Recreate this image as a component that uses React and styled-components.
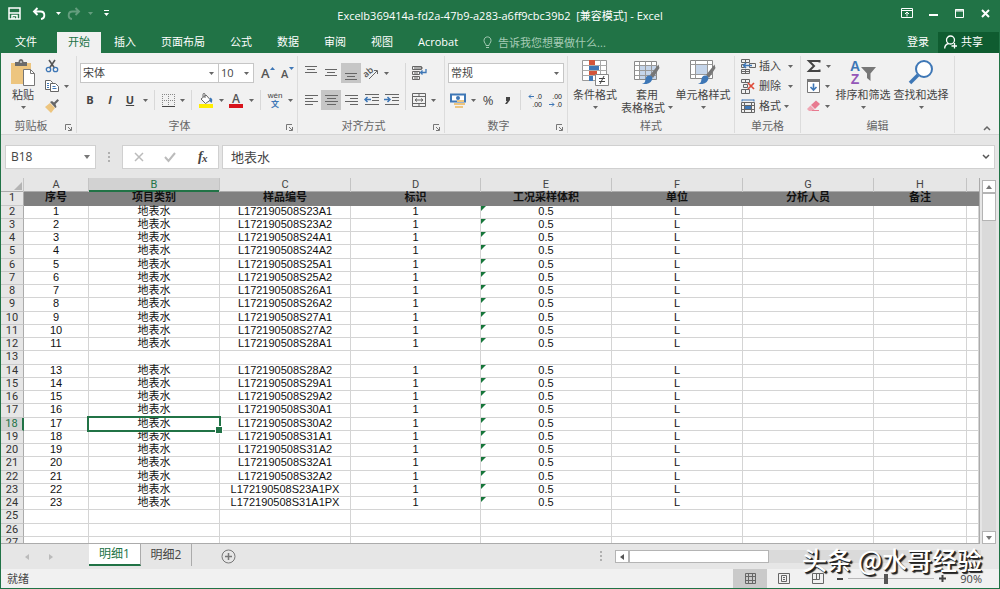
import React from "react";
import styled, { createGlobalStyle, css } from "styled-components";

const GREEN = "#217346";
const INK = "#444";
const BLUE = "#3e77b6";
const UI_FONT = '"Open Sans", "Noto Sans CJK SC", sans-serif';

const GlobalStyle = createGlobalStyle`
  * { box-sizing: border-box; }
  body { margin: 0; background: #e6e6e6; overflow: hidden; }
  button, input, select { font: inherit; color: inherit; border: 0; padding: 0; margin: 0; background: none; border-radius: 0; outline: 0; }
  svg { display: block; flex: none; overflow: visible; }
`;

const Window = styled.div`
  height: 100vh;
  display: flex;
  flex-direction: column;
  border: solid ${GREEN};
  border-width: 0 1px 1px;
  background: #e6e6e6;
  color: ${INK};
  font: 11px/14px ${UI_FONT};
  position: relative;
`;

/* ---------- title bar and tabs ---------- */

const TitleBar = styled.header`
  height: 32px;
  flex: none;
  display: grid;
  grid-template-columns: 1fr auto 1fr;
  align-items: center;
  background: ${GREEN};
  color: #fff;
`;

const QuickAccess = styled.div`
  display: flex;
  align-items: center;
  padding: 0 0 6px 3px;
`;

const Title = styled.h1`
  margin: 0;
  font-size: 11px;
  line-height: 16px;
  font-weight: 400;
  white-space: pre;
`;

const WindowButtons = styled.div`
  display: flex;
  justify-content: flex-end;
  padding: 0 1px 6px 0;
`;

const BarButton = styled.button`
  width: ${(p) => p.$w || 20}px;
  height: 20px;
  display: flex;
  align-items: center;
  justify-content: center;
  opacity: ${(p) => (p.$dim ? 0.3 : 1)};
`;

const TabBar = styled.nav`
  height: 21px;
  flex: none;
  display: flex;
  background: ${GREEN};
  color: #fff;
`;

const Tab = styled.button`
  padding: 0 12px 2px;
  margin-right: 1px;
  white-space: nowrap;
  ${(p) => p.$file && css`padding: 0 15px 2px 14px; margin-right: 5px;`}
  ${(p) => p.$active && css`padding: 0 11px 2px; background: #f1f1f1; color: ${GREEN};`}
`;

const TellMe = styled.button`
  display: flex;
  align-items: center;
  gap: 6px;
  margin-left: 12px;
  color: #a5cbb5;
`;

const Account = styled.div`
  margin-left: auto;
  display: flex;
`;

const SignIn = styled.button`
  padding: 0 9px 2px;
`;

const Share = styled.button`
  display: flex;
  align-items: center;
  gap: 4px;
  padding: 0 16px 2px 6px;
  background: #0f5c30;
`;

/* ---------- ribbon ---------- */

const Ribbon = styled.div`
  height: 82px;
  flex: none;
  display: flex;
  background: #f1f1f1;
  border-bottom: 1px solid #d4d4d4;
`;

const Group = styled.section`
  width: ${(p) => p.$w}px;
  flex: none;
  display: flex;
  flex-direction: column;
  border-right: 1px solid #dcdcdc;
  margin: 3px 0 1px;
`;

const GroupBody = styled.div`
  flex: 1;
  display: flex;
  justify-content: ${(p) => (p.$center ? "center" : "flex-start")};
  padding: ${(p) => p.$pad || "0 3px"};
`;

const GroupFooter = styled.div`
  height: 14px;
  display: flex;
  align-items: center;
  color: #666;
`;

const GroupName = styled.span`
  flex: 1;
  text-align: center;
`;

const Launcher = styled.button`
  width: 15px;
  height: 14px;
  padding-top: 3px;
  display: grid;
  place-items: center;
`;

const Lines = styled.div`
  display: flex;
  flex-direction: column;
  gap: 7px;
  width: ${(p) => (p.$w ? p.$w + "px" : "auto")};
  padding-top: 7px;
`;

const Line = styled.div`
  display: flex;
  align-items: center;
  height: 20px;
`;

const Tool = styled.button`
  width: ${(p) => p.$w || 20}px;
  height: 20px;
  display: flex;
  align-items: center;
  justify-content: center;
  flex: none;
  font-size: ${(p) => p.$size || 11}px;
  font-weight: ${(p) => (p.$bold ? 700 : 400)};
  font-style: ${(p) => (p.$italic ? "italic" : "normal")};
  text-decoration: ${(p) => (p.$under ? "underline" : "none")};
  background: ${(p) => (p.$on ? "#c6c6c6" : "transparent")};
`;

const Divider = styled.span`
  width: 1px;
  height: ${(p) => p.$h || 20}px;
  margin: ${(p) => (p.$h ? "7px 4px 0" : "0 4px")};
  background: #d8d8d8;
  flex: none;
`;

const BigButton = styled.button`
  width: ${(p) => p.$w}px;
  flex: none;
  display: flex;
  flex-direction: column;
  align-items: center;
  padding-top: 3px;
  height: 60px;
  white-space: nowrap;
`;

const BigIcon = styled.span`
  height: 29px;
`;

const BigLine = styled.span`
  height: 13px;
  line-height: 14px;
  display: flex;
  align-items: center;
  gap: 3px;
`;

const Stack = styled.div`
  display: flex;
  flex-direction: column;
`;

const SmallButton = styled.button`
  height: 20px;
  display: flex;
  align-items: center;
  gap: ${(p) => p.$gap || 3}px;
  padding: 0 3px;
  white-space: nowrap;
  svg:last-child { margin-left: ${(p) => (p.$wide ? 4 : 0)}px; }
`;

const SelectBox = styled.label`
  position: relative;
  width: ${(p) => p.$w}px;
  height: 20px;
  border: 1px solid #c6c6c6;
  margin-right: ${(p) => p.$after || 0}px;
  background: #fff;
  & + & { border-left: 0; }
  select { appearance: none; width: 100%; height: 18px; padding-left: 2px; }
  svg { position: absolute; right: 4px; top: 8px; pointer-events: none; }
`;

const Collapse = styled.button`
  margin: auto 8px 3px auto;
`;

/* ---------- formula bar ---------- */

const FormulaBar = styled.div`
  height: 43px;
  flex: none;
  display: flex;
  align-items: center;
  padding: 1px 4px 0;
  font-size: 13px;
`;

const Field = styled.div`
  height: 24px;
  width: ${(p) => (p.$w ? p.$w + "px" : "auto")};
  flex: ${(p) => (p.$w ? "none" : "1")};
  display: flex;
  align-items: center;
  justify-content: space-around;
  background: #fff;
  border: 1px solid #d0d0d0;
  margin-right: ${(p) => p.$after || 0}px;
  input { flex: 1; min-width: 0; height: 22px; padding: 0 0 2px ${(p) => p.$indent || 0}px; }
`;

const NameField = styled(Field)`
  font-size: 12px;
`;

const FieldArrow = styled.button`
  width: 16px;
  height: 22px;
  display: grid;
  place-items: center;
`;

const Dots = styled.span`
  width: 26px;
  display: grid;
  place-items: center;
  flex: none;
`;

/* ---------- sheet ---------- */

const SheetArea = styled.main`
  flex: 1;
  min-height: 0;
  display: flex;
`;

const GridPane = styled.div`
  flex: 1;
  min-width: 0;
  overflow: hidden;
  border-right: 1px solid #ababab;
  border-bottom: 1px solid #ababab;
`;

const Grid = styled.table`
  width: 100%;
  table-layout: fixed;
  border-collapse: separate;
  border-spacing: 0;
  font: 11px/11px "Liberation Sans", "Noto Sans CJK SC", sans-serif;
  color: #111;
  th, td { padding: 0; text-align: center; vertical-align: top; white-space: nowrap; }
`;

const ColumnHead = styled.th`
  height: 14px;
  font: 400 11px/14px Roboto, sans-serif;
  color: ${(p) => (p.$on ? GREEN : INK)};
  background: ${(p) => (p.$on ? "#d2d2d2" : "#e6e6e6")};
  border-right: 1px solid #c4c4c4;
  box-shadow: inset 0 ${(p) => (p.$on ? `-2px ${GREEN}` : "-1px #ababab")};
  &:last-child { border-right: 0; }
  svg { margin: 4px 0 0 13px; }
`;

const Row = styled.tr`
  height: 13px;
  &:nth-child(4n + 1) { height: 14px; }
`;

const RowHead = styled.th`
  font: 400 11px/12px Roboto, sans-serif;
  color: ${(p) => (p.$on ? GREEN : "#333")};
  background: ${(p) => (p.$on ? "#d2d2d2" : "#e6e6e6")};
  border-right: ${(p) => (p.$on ? `2px solid ${GREEN}` : "1px solid #ababab")};
  border-bottom: 1px solid #c8c8c8;
`;

const Cell = styled.td`
  position: relative;
  background: #fff;
  border-right: 1px solid #d4d4d4;
  border-bottom: 1px solid #d4d4d4;
  ${(p) => p.$title && css`background: #808080; border-color: #808080; font-weight: 700;`}
  ${(p) => p.$flag && css`
    &::before {
      content: "";
      position: absolute;
      left: 0;
      top: 0;
      border-top: 5px solid #16763a;
      border-right: 5px solid transparent;
    }
  `}
`;

const Selection = styled.span`
  position: absolute;
  z-index: 1;
  inset: -2px;
  border: 2px solid ${GREEN};
  &::after {
    content: "";
    position: absolute;
    right: -4px;
    bottom: -4px;
    width: 6px;
    height: 6px;
    background: ${GREEN};
    border: 1px solid #fff;
  }
`;

const VerticalScroll = styled.div`
  width: 19px;
  flex: none;
  padding: 2px 3px 0 2px;
  display: flex;
  flex-direction: column;
`;

const VerticalTrack = styled.div`
  flex: 1;
  background: #dadada;
`;

const ScrollButton = styled.button`
  width: 14px;
  height: 13px;
  flex: none;
  display: grid;
  place-items: center;
  background: #fff;
  border: 1px solid #b4b4b4;
`;

const VerticalThumb = styled.div`
  height: 28px;
  background: #fff;
  border: 1px solid #b4b4b4;
`;

/* ---------- sheet tabs and status bar ---------- */

const SheetTabs = styled.div`
  height: 25px;
  flex: none;
  display: flex;
  align-items: center;
`;

const SheetNav = styled.div`
  width: 88px;
  display: flex;
  padding-left: 16px;
`;

const SheetTab = styled.button`
  height: 22px;
  width: ${(p) => (p.$active ? 52 : 51)}px;
  align-self: flex-start;
  font-size: 12px;
  border-right: 1px solid #ababab;
  ${(p) => p.$active && css`
    background: #fff;
    color: ${GREEN};
    border-bottom: 2px solid ${GREEN};
  `}
`;

const AddSheet = styled.button`
  margin-left: 29px;
`;

const HorizontalScroll = styled.div`
  width: 366px;
  height: 13px;
  margin-right: 18px;
  display: flex;
  background: #dadada;
`;

const HorizontalThumb = styled.div`
  width: 140px;
  background: #fff;
  border: 1px solid #b4b4b4;
`;

const Grip = styled(Dots)`
  margin-left: auto;
  width: 28px;
`;

const StatusBar = styled.footer`
  height: 19px;
  flex: none;
  display: flex;
  align-items: center;
  background: #f1f1f1;
  padding: 0 17px 0 6px;
`;

const Views = styled.div`
  margin-left: auto;
  display: flex;
  align-self: stretch;
`;

const ViewButton = styled.button`
  width: 34px;
  display: grid;
  place-items: center;
  background: ${(p) => (p.$on ? "#cacaca" : "transparent")};
`;

const ZoomStep = styled.button`
  width: 10px;
  display: grid;
  place-items: center;
`;

const ZoomSlider = styled.input`
  appearance: none;
  width: 86px;
  height: 12px;
  margin: 0 3px;
  background: linear-gradient(#b8b8b8, #b8b8b8) center / 100% 1px no-repeat;
  &::-webkit-slider-thumb {
    appearance: none;
    width: 4px;
    height: 10px;
    background: #555;
  }
`;

const ZoomValue = styled.span`
  width: 35px;
  text-align: right;
`;

const Watermark = styled.div`
  position: absolute;
  right: 17px;
  bottom: 15px;
  font: 500 25px/28px "Noto Sans CJK SC", sans-serif;
  color: #fff;
  text-shadow: 1px 1px 0 #222, 2px 2px 1px #222;
  pointer-events: none;
`;

/* ---------- icons ---------- */

const Svg = ({ w = 16, h = 16, children, ...rest }) => (
  <svg width={w} height={h} viewBox={`0 0 ${w} ${h}`} fill="none" stroke="currentColor" aria-hidden="true" {...rest}>
    {children}
  </svg>
);

const Caret = ({ color = "#666" }) => (
  <Svg w={5} h={3} stroke="none"><path d="M0 0h5L2.500 3z" fill={color} /></Svg>
);

const Save = () => (
  <Svg w={13} h={13} strokeWidth="1.500">
    <path d="M1 1h11v11H1zM1 6h11M4 12V8.500h5V12M6 10v2" />
  </Svg>
);

const Undo = ({ flip }) => (
  <Svg w={14} h={13} strokeWidth="1.900">
    <g transform={flip ? "translate(14 0) scale(-1 1)" : undefined}>
      <path d="M2 4.500h6.500c5 0 5 7 .5 7.500M5.500 1L2 4.500 5.500 8" />
    </g>
  </Svg>
);

const Paste = () => (
  <Svg w={26} h={28}>
    <path d="M1 4h20v21H1z" fill="#edc57f" stroke="none" />
    <path d="M5 3h3.500c0-4 5-4 5 0H17v4H5z" fill="#6b6b6b" stroke="none" />
    <path d="M10 3h2" stroke="#fff" />
    <path d="M13.500 10.500h7l4 4v12h-11z" fill="#fff" stroke="#777" />
    <path d="M20.500 10.500v4h4" stroke="#777" />
  </Svg>
);

const Cut = () => (
  <Svg w={14} h={14}>
    <path d="M4 1l5.500 8M10 1L4.500 9" stroke="#555" strokeWidth="1.600" />
    <circle cx="3.500" cy="10.500" r="2.200" stroke={BLUE} strokeWidth="1.300" />
    <circle cx="10.500" cy="10.500" r="2.200" stroke={BLUE} strokeWidth="1.300" />
  </Svg>
);

const Copy = () => (
  <Svg w={14} h={14} stroke="#666">
    <path d="M.500 1.500h5l2 2v7h-7z" fill="#fff" />
    <path d="M5.500 4.500h5l3 3v5h-8z" fill="#fff" />
    <path d="M2 4.500h2M2 6.500h2M2 8.500h2M7.500 7.500h3M7.500 9.500h4" stroke={BLUE} />
  </Svg>
);

const Painter = () => (
  <Svg w={14} h={14} stroke="none">
    <path d="M0 8l5-4 5 5-4 5z" fill="#edc57f" />
    <path d="M5 3l2-1 2 1.500L12.500 0 14 1.500 10.500 5l1 3-1 1z" fill="#666" />
  </Svg>
);

const GrowFont = ({ down }) => (
  <Svg w={15} h={15} stroke="none">
    <text x="0" y="12" fontSize={down ? 11 : 13} fontWeight="600" fill="#555">A</text>
    <path d={down ? "M8 1h5l-2.500 3z" : "M9 4h5l-2.500-3z"} fill={BLUE} />
  </Svg>
);

const Borders = () => (
  <Svg w={13} h={13} stroke="#888" strokeDasharray="1 1">
    <path d="M.500 0v13M6.500 0v13M12.500 0v13M0 .500h13M0 6.500h13" />
    <path d="M0 12.500h13" stroke="#444" strokeDasharray="none" />
  </Svg>
);

const Fill = () => (
  <Svg w={16} h={15}>
    <path d="M3 6l5-4 4.500 5-5 3.500z" fill="#fff" stroke="#666" />
    <path d="M7 5V1.500c0-1.500-2-1.500-2 0V4" stroke="#666" />
    <path d="M12 4.500c3 1 2.500 3 1.500 5.500L11.500 8z" fill={BLUE} stroke="none" />
    <path d="M1 11h14v4H1z" fill="#ffee00" stroke="none" />
  </Svg>
);

const FontColor = () => (
  <Svg w={14} h={15} stroke="none">
    <text x="7" y="10" fontSize="12" fontWeight="600" textAnchor="middle" fill="#555">A</text>
    <path d="M0 11h14v4H0z" fill="#d8141c" />
  </Svg>
);

const Phonetic = () => (
  <Svg w={16} h={16} stroke="none" fontFamily="Liberation Sans, Noto Sans CJK SC, sans-serif">
    <text x="8" y="6" fontSize="8" textAnchor="middle" fill="#444">wén</text>
    <text x="8" y="15" fontSize="8" fontWeight="700" textAnchor="middle" fill={BLUE}>文</text>
  </Svg>
);

const VAlign = ({ y }) => (
  <Svg w={14} h={14} stroke="#666">
    <path d={`M1 ${y + 0.5}h12M3 ${y + 3.5}h8M1 ${y + 6.5}h12`} />
  </Svg>
);

const HAlign = ({ x, w = 8 }) => (
  <Svg w={13} h={12} stroke="#666">
    <path d={`M0 1.500h13M${x} 4.500h${w}M0 7.500h13M${x} 10.500h${w}`} />
  </Svg>
);

const Orientation = () => (
  <Svg w={15} h={14}>
    <text x="0" y="9" fontSize="9" fontWeight="600" fill="#555" stroke="none" transform="rotate(-40 5 8)">ab</text>
    <path d="M5 13l8-8M10 4.500h3.500V8" stroke="#666" />
  </Svg>
);

const Indent = ({ right }) => (
  <Svg w={15} h={12} stroke="#666">
    <path d="M1 .500h14M8 3.500h7M8 6.500h7M1 10.500h14" />
    <path d={right ? "M0 5.500h6M3.500 3l2.500 2.500L3.500 8" : "M1 5.500h6M3.500 3L1 5.500 3.500 8"} stroke={BLUE} strokeWidth="1.500" />
  </Svg>
);

const Wrap = () => (
  <Svg w={15} h={14} stroke="#666">
    <path d="M.500 .500h9v3h-9zM.500 5.500h7v3h-7zM.500 10.500h7v3h-7zM2 2h9M2 7h4M2 12h4" />
    <path d="M14 3v3.500H8.500M10.500 4.500L8.500 6.500l2 2" stroke={BLUE} strokeWidth="1.300" />
  </Svg>
);

const Merge = () => (
  <Svg w={14} h={14} stroke="#666">
    <path d="M.500 .500h13v13H.500zM.500 3.500h13M.500 10.500h13M7 .500v3M7 10.500v3" />
    <path d="M3 7h8M5 5.500L3 7l2 1.500M9 5.500L11 7 9 8.500" />
  </Svg>
);

const Currency = () => (
  <Svg w={16} h={15}>
    <path d="M1 1.500h14v7H1z" stroke={BLUE} strokeWidth="2" fill="#fff" />
    <circle cx="8" cy="5" r="2" fill={BLUE} stroke="none" />
    <path d="M7 7h7v2H7zM8 10h7v2H8zM4 10h6v2H4zM5 13h8v2H5z" fill="#edc57f" stroke="none" />
  </Svg>
);

const Decimals = ({ less }) => (
  <Svg w={15} h={16} stroke="none" fontFamily="Liberation Sans, sans-serif">
    <text x="14" y="7" fontSize="7" textAnchor="end" fill="#222">{less ? ".00" : ".0"}</text>
    <text x="14" y="15" fontSize="7" textAnchor="end" fill="#222">{less ? ".0" : ".00"}</text>
    <path d={less ? "M1 12.500h5M4 10.500l2 2-2 2" : "M1 4.500h5M3 2.500l-2 2 2 2"} stroke={BLUE} />
  </Svg>
);

const Brush = () => (
  <>
    <path d="M25.500 5.500L17 16l3 3 6.500-10z" fill="#777" stroke="none" />
    <path d="M16 16.500c3 0 4 2 3 4.500-1.500 3.500-6 4.500-10 4 3-1 3-2 3.500-5 .500-2 1.500-3.500 3.500-3.500z" fill={BLUE} stroke="none" />
  </>
);

const Conditional = () => (
  <Svg w={28} h={28}>
    <path d="M1.500 1.500h24v20h-24z" fill="#fff" stroke="#999" />
    <path d="M8.500 1.500v20M19.500 1.500v20M1.500 6.500h24M1.500 11.500h24M1.500 16.500h24" stroke="#aaa" />
    <path d="M8 1h6v5H8zM8 12h8v4H8z" fill="#d3553a" stroke="none" />
    <path d="M8 7h10v4H8zM8 17h4v5H8z" fill={BLUE} stroke="none" />
    <path d="M14.500 15.500h13v11h-13z" fill="#fff" stroke="#888" />
    <path d="M18 19.500h6M18 22.500h6M23 17l-4 8" stroke="#444" />
  </Svg>
);

const FormatTable = () => (
  <Svg w={28} h={28}>
    <path d="M1.500 2.500h22v18h-22z" fill="#fff" stroke="#888" />
    <path d="M7 7h16v13H7z" fill="#c5d5ea" stroke="none" />
    <path d="M6.500 2.500v18M12.500 2.500v18M18.500 2.500v18M1.500 6.500h22M1.500 11.500h22M1.500 16.500h22" stroke="#999" />
    <Brush />
  </Svg>
);

const CellStyles = () => (
  <Svg w={28} h={28}>
    <path d="M1.500 1.500h22v18h-22z" fill="#fff" stroke="#888" />
    <path d="M6.500 1.500v18M18.500 1.500v18M1.500 5.500h22M1.500 15.500h22" stroke="#999" />
    <path d="M7 6h11v9H7z" fill="#c5d5ea" stroke="none" />
    <Brush />
  </Svg>
);

const InsertCells = () => (
  <Svg w={15} h={15} stroke="#666">
    <path d="M.500 .500h8v3h-8zM4.500 .500v3M.500 10.500h8v4h-8zM4.500 10.500v4M.500 12.500h8M.500 5.500h3v3h-3zM8.500 4.500h6v4h-6z" />
    <path d="M2 6.500h9M5 4L2.500 6.500 5 9" stroke={BLUE} strokeWidth="1.500" />
  </Svg>
);

const DeleteCells = () => (
  <Svg w={15} h={15} stroke="#666">
    <path d="M.500 .500h8v3h-8zM4.500 .500v3M.500 10.500h8v4h-8zM4.500 10.500v4M2.500 5.500h4v3h-4z" />
    <path d="M7 4l6 6M13 4l-6 6" stroke="#df4b38" strokeWidth="1.700" />
  </Svg>
);

const FormatCells = () => (
  <Svg w={15} h={15} stroke="#666">
    <path d="M1 1h12M1 .500v2M13 .500v2" stroke={BLUE} />
    <path d="M.500 3.500h13v10H.500zM3.500 3.500v10M10.500 3.500v10M.500 6.500h13M.500 10.500h13" />
    <path d="M4 7h6v3H4z" fill={BLUE} stroke="none" />
  </Svg>
);

const Sigma = () => (
  <Svg w={14} h={14} strokeWidth="2"><path d="M12.500 3.500V2H2l5 5-5 5h10.500v-1.500" /></Svg>
);

const FillDown = () => (
  <Svg w={13} h={14}>
    <path d="M.500 .500h12v13H.500z" fill="#fff" stroke="#777" />
    <path d="M0 0h13v3H0z" fill="#777" stroke="none" />
    <path d="M6.500 4.500V11M3.500 8l3 3 3-3" stroke={BLUE} strokeWidth="1.600" />
  </Svg>
);

const Eraser = () => (
  <Svg w={13} h={12} stroke="none">
    <path d="M4 5l5-4.500L13 4 8 9z" fill="#e87a90" />
    <path d="M3.500 5.500L0 9l2 2h4l1.500-1.500z" fill="#f0a6b4" />
    <path d="M5 10.500h7" stroke="#e87a90" />
  </Svg>
);

const SortFilter = () => (
  <Svg w={26} h={28} stroke="none" fontFamily="Liberation Sans, sans-serif">
    <text x="5" y="12" fontSize="14" fontWeight="700" textAnchor="middle" fill={BLUE}>A</text>
    <text x="5" y="25" fontSize="14" fontWeight="700" textAnchor="middle" fill="#9457b8">Z</text>
    <path d="M11 8h15l-5.500 6.500V22L17 19v-4.500z" fill="#777" />
  </Svg>
);

const Find = () => (
  <Svg w={26} h={28}>
    <circle cx="16" cy="10" r="8" fill="#fff" stroke={BLUE} strokeWidth="2" />
    <path d="M10 16l-8 8" stroke={BLUE} strokeWidth="3.500" />
  </Svg>
);

const LauncherIcon = () => (
  <Svg w={7} h={7} stroke="#777"><path d="M.500 6V.500H6M3 3l3 3M6.500 3v3.500H3" /></Svg>
);

const DotsIcon = () => (
  <Svg w={2} h={11} stroke="none">
    <path d="M0 0h2v2H0zM0 4h2v2H0zM0 8h2v2H0z" fill="#b0b0b0" />
  </Svg>
);

/* ---------- parts ---------- */

const RibbonGroup = ({ name, w, launcher, center, pad, children }) => (
  <Group $w={w} aria-label={name}>
    <GroupBody $center={center} $pad={pad}>{children}</GroupBody>
    <GroupFooter>
      <GroupName>{name}</GroupName>
      {launcher && <Launcher aria-label={`${name}设置`}><LauncherIcon /></Launcher>}
    </GroupFooter>
  </Group>
);

const Drop = () => <Tool $w={10} aria-label="更多"><Caret /></Tool>;

const Big = ({ icon, w, label, second }) => (
  <BigButton $w={w}>
    <BigIcon>{icon}</BigIcon>
    <BigLine>{label}</BigLine>
    <BigLine>{second}<Caret /></BigLine>
  </BigButton>
);

const Select = ({ w, value, label, after }) => (
  <SelectBox $w={w} $after={after}>
    <select aria-label={label} defaultValue={value}><option>{value}</option></select>
    <Caret />
  </SelectBox>
);

const COLUMNS = [
  ["A", 65], ["B", 131], ["C", 131], ["D", 130], ["E", 131], ["F", 131], ["G", 131], ["H", 93],
];
const TITLES = ["序号", "项目类别", "样品编号", "标识", "工况采样体积", "单位", "分析人员", "备注", ""];
const SAMPLES = [
  "23A1", "23A2", "24A1", "24A2", "25A1", "25A2", "26A1", "26A2", "27A1", "27A2", "28A1", null,
  "28A2", "29A1", "29A2", "30A1", "30A2", "31A1", "31A2", "32A1", "32A2", "23A1PX", "31A1PX",
  null, null, null,
];
const TABS = ["插入", "页面布局", "公式", "数据", "审阅", "视图", "Acrobat"];

const Sheet = () => (
  <Grid>
    <colgroup>
      <col style={{ width: 23 }} />
      {COLUMNS.map(([name, width]) => <col key={name} style={{ width }} />)}
      <col />
    </colgroup>
    <thead>
      <tr>
        <ColumnHead aria-label="全选">
          <Svg w={8} h={8} stroke="none"><path d="M8 0v8H0z" fill="#b4b4b4" /></Svg>
        </ColumnHead>
        {COLUMNS.map(([name]) => <ColumnHead key={name} $on={name === "B"}>{name}</ColumnHead>)}
        <ColumnHead />
      </tr>
    </thead>
    <tbody>
      <Row>
        <RowHead>1</RowHead>
        {TITLES.map((t, i) => <Cell key={i} $title>{t}</Cell>)}
      </Row>
      {SAMPLES.map((s, i) => {
        const number = i + 2;
        const values = s ? [i + 1, "地表水", `L172190508S${s}`, 1, "0.5", "L", "", "", ""] : Array(9).fill("");
        return (
          <Row key={number}>
            <RowHead $on={number === 18}>{number}</RowHead>
            {values.map((v, c) => (
              <Cell key={c} $flag={c === 4 && s}>
                {v}
                {number === 18 && c === 1 && <Selection />}
              </Cell>
            ))}
          </Row>
        );
      })}
    </tbody>
  </Grid>
);

export default function App() {
  return (
    <Window>
      <GlobalStyle />
      <TitleBar>
        <QuickAccess>
          <BarButton aria-label="保存"><Save /></BarButton>
          <BarButton $w={30} aria-label="撤消"><Undo /></BarButton>
          <BarButton $w={8} aria-label="撤消列表"><Caret color="#fff" /></BarButton>
          <BarButton $w={24} $dim aria-label="恢复"><Undo flip /></BarButton>
          <BarButton $w={8} $dim aria-label="恢复列表"><Caret color="#fff" /></BarButton>
          <BarButton $w={24} aria-label="自定义">
            <Svg w={5} h={6} stroke="none"><path d="M0 0h5v1H0zM0 3h5L2.500 6z" fill="#fff" /></Svg>
          </BarButton>
        </QuickAccess>
        <Title>Excelb369414a-fd2a-47b9-a283-a6ff9cbc39b2  [兼容模式] - Excel</Title>
        <WindowButtons>
          <BarButton $w={26} aria-label="功能区显示选项">
            <Svg w={12} h={10}><path d="M.500 .500h11v9H.500zM.500 2.500h11M6 8.500V4.500M4 6l2-2 2 2" /></Svg>
          </BarButton>
          <BarButton $w={26} aria-label="最小化"><Svg w={9} h={6} strokeWidth="2"><path d="M0 5h9" /></Svg></BarButton>
          <BarButton $w={26} aria-label="最大化"><Svg w={9} h={9}><path d="M.500 .500h8v8h-8zM0 2h9M0 1h9" /></Svg></BarButton>
          <BarButton $w={26} aria-label="关闭"><Svg w={9} h={9} strokeWidth="2"><path d="M1 1l7 7M8 1L1 8" /></Svg></BarButton>
        </WindowButtons>
      </TitleBar>

      <TabBar>
        <Tab $file>文件</Tab>
        <Tab $active>开始</Tab>
        {TABS.map((t) => <Tab key={t}>{t}</Tab>)}
        <TellMe>
          <Svg w={9} h={13}><path d="M3 9.500C3 7.500 1 7 1 4.500 1 -.300 8 -.300 8 4.500 8 7 6 7.500 6 9.500zM3 11.500h3" /></Svg>
          告诉我您想要做什么...
        </TellMe>
        <Account>
          <SignIn>登录</SignIn>
          <Share>
            <Svg w={13} h={14} strokeWidth="1.300">
              <circle cx="6.500" cy="5" r="4" /><path d="M.700 13.500c0-3 2-4.500 4-5M10.500 8v5.500M7.500 11h5.500" />
            </Svg>
            共享
          </Share>
        </Account>
      </TabBar>

      <Ribbon>
        <RibbonGroup name="剪贴板" w={76} launcher>
          <Big icon={<Paste />} w={38} label="粘贴" />
          <Stack>
            <SmallButton aria-label="剪切"><Cut /></SmallButton>
            <SmallButton $gap={5} aria-label="复制"><Copy /><Caret /></SmallButton>
            <SmallButton aria-label="格式刷"><Painter /></SmallButton>
          </Stack>
        </RibbonGroup>

        <RibbonGroup name="字体" w={221} launcher>
          <Lines>
            <Line>
              <Select w={139} value="宋体" label="字体" />
              <Select w={35} value="10" label="字号" after={4} />
              <Tool aria-label="增大字号"><GrowFont /></Tool>
              <Tool aria-label="减小字号"><GrowFont down /></Tool>
            </Line>
            <Line>
              <Tool $bold>B</Tool>
              <Tool $bold $italic>I</Tool>
              <Tool $bold $under>U</Tool>
              <Drop />
              <Divider />
              <Tool $w={18} aria-label="边框"><Borders /></Tool>
              <Drop />
              <Divider />
              <Tool aria-label="填充颜色"><Fill /></Tool>
              <Drop />
              <Tool aria-label="字体颜色"><FontColor /></Tool>
              <Drop />
              <Divider />
              <Tool aria-label="拼音"><Phonetic /></Tool>
              <Drop />
            </Line>
          </Lines>
        </RibbonGroup>

        <RibbonGroup name="对齐方式" w={147} launcher>
          <Lines $w={100}>
            <Line>
              <Tool aria-label="顶端对齐"><VAlign y={0} /></Tool>
              <Tool aria-label="垂直居中"><VAlign y={3} /></Tool>
              <Tool $on aria-label="底端对齐"><VAlign y={7} /></Tool>
              <Tool aria-label="方向"><Orientation /></Tool>
              <Drop />
            </Line>
            <Line>
              <Tool aria-label="左对齐"><HAlign x={0} /></Tool>
              <Tool $on aria-label="居中"><HAlign x={2} w={9} /></Tool>
              <Tool aria-label="右对齐"><HAlign x={5} /></Tool>
              <Tool aria-label="减少缩进"><Indent /></Tool>
              <Tool aria-label="增加缩进"><Indent right /></Tool>
            </Line>
          </Lines>
          <Divider $h={47} />
          <Lines>
            <Line><Tool $w={18} aria-label="自动换行"><Wrap /></Tool></Line>
            <Line><Tool $w={18} aria-label="合并后居中"><Merge /></Tool><Drop /></Line>
          </Lines>
        </RibbonGroup>

        <RibbonGroup name="数字" w={123} launcher>
          <Lines>
            <Line><Select w={116} value="常规" label="数字格式" /></Line>
            <Line>
              <Tool aria-label="会计数字格式"><Currency /></Tool>
              <Drop />
              <Tool $size={13}>%</Tool>
              <Tool $w={18} $bold aria-label="千位分隔样式">
                <Svg w={5} h={7} stroke="none"><path d="M1 0h4v3L2 7H0l2-3H1z" fill="#444" /></Svg>
              </Tool>
              <Divider />
              <Tool aria-label="增加小数位数"><Decimals /></Tool>
              <Tool aria-label="减少小数位数"><Decimals less /></Tool>
            </Line>
          </Lines>
        </RibbonGroup>

        <RibbonGroup name="样式" w={167} center>
          <Big icon={<Conditional />} w={50} label="条件格式" />
          <Big icon={<FormatTable />} w={54} label="套用" second="表格格式" />
          <Big icon={<CellStyles />} w={58} label="单元格样式" />
        </RibbonGroup>

        <RibbonGroup name="单元格" w={66}>
          <Stack>
            <SmallButton $wide><InsertCells />插入<Caret /></SmallButton>
            <SmallButton $wide><DeleteCells />删除<Caret /></SmallButton>
            <SmallButton><FormatCells />格式<Caret /></SmallButton>
          </Stack>
        </RibbonGroup>

        <RibbonGroup name="编辑" w={154}>
          <Stack>
            <SmallButton $gap={5} aria-label="自动求和"><Sigma /><Caret /></SmallButton>
            <SmallButton $gap={5} aria-label="填充"><FillDown /><Caret /></SmallButton>
            <SmallButton $gap={5} aria-label="清除"><Eraser /><Caret /></SmallButton>
          </Stack>
          <Big icon={<SortFilter />} w={58} label="排序和筛选" />
          <Big icon={<Find />} w={58} label="查找和选择" />
        </RibbonGroup>
        <Collapse aria-label="折叠功能区">
          <Svg w={8} h={6} stroke="#666" strokeWidth="1.500"><path d="M1 5l3-3 3 3" /></Svg>
        </Collapse>
      </Ribbon>

      <FormulaBar>
        <NameField $w={91} $indent={5}>
          <input aria-label="名称框" defaultValue="B18" />
          <FieldArrow aria-label="名称列表"><Svg w={6} h={4} stroke="none"><path d="M0 0h6L3 4z" fill="#777" /></Svg></FieldArrow>
        </NameField>
        <Dots><DotsIcon /></Dots>
        <Field $w={97} $after={3}>
          <BarButton aria-label="取消"><Svg w={10} h={10} stroke="#bbb" strokeWidth="1.500"><path d="M1 1l8 8M9 1L1 9" /></Svg></BarButton>
          <BarButton aria-label="输入"><Svg w={12} h={10} stroke="#bbb" strokeWidth="2"><path d="M1 5l3.500 4L11 1" /></Svg></BarButton>
          <BarButton aria-label="插入函数">
            <Svg w={13} h={14} stroke="none">
              <text x="2" y="11" fontSize="14" fontStyle="italic" fontWeight="700" fontFamily="Liberation Serif, serif" fill="#444">f</text>
              <text x="6" y="12" fontSize="11" fontStyle="italic" fontWeight="700" fontFamily="Liberation Serif, serif" fill="#444">x</text>
            </Svg>
          </BarButton>
        </Field>
        <Field $indent={8}>
          <input aria-label="编辑栏" defaultValue="地表水" />
          <FieldArrow aria-label="展开编辑栏"><Svg w={8} h={6} stroke="#555" strokeWidth="1.500"><path d="M1 1l3 3 3-3" /></Svg></FieldArrow>
        </Field>
      </FormulaBar>

      <SheetArea>
        <GridPane><Sheet /></GridPane>
        <VerticalScroll>
          <ScrollButton aria-label="向上"><Svg w={6} h={4} stroke="none"><path d="M3 0l3 4H0z" fill="#777" /></Svg></ScrollButton>
          <VerticalThumb />
          <VerticalTrack />
          <ScrollButton aria-label="向下"><Svg w={6} h={4} stroke="none"><path d="M0 0h6L3 4z" fill="#777" /></Svg></ScrollButton>
        </VerticalScroll>
      </SheetArea>

      <SheetTabs>
        <SheetNav>
          <BarButton aria-label="上一张"><Svg w={4} h={6} stroke="none"><path d="M4 0v6L0 3z" fill="#bbb" /></Svg></BarButton>
          <BarButton $w={28} aria-label="下一张"><Svg w={4} h={6} stroke="none"><path d="M0 0v6l4-3z" fill="#bbb" /></Svg></BarButton>
        </SheetNav>
        <SheetTab $active>明细1</SheetTab>
        <SheetTab>明细2</SheetTab>
        <AddSheet aria-label="新工作表">
          <Svg w={15} h={15} stroke="#777"><circle cx="7.500" cy="7.500" r="6.500" /><path d="M4 7.500h7M7.500 4v7" strokeWidth="1.500" /></Svg>
        </AddSheet>
        <Grip><DotsIcon /></Grip>
        <HorizontalScroll>
          <ScrollButton aria-label="向左"><Svg w={4} h={6} stroke="none"><path d="M4 0v6L0 3z" fill="#555" /></Svg></ScrollButton>
          <HorizontalThumb />
        </HorizontalScroll>
      </SheetTabs>

      <StatusBar>
        <span>就绪</span>
        <Views>
          <ViewButton $on aria-label="普通"><Svg w={11} h={11} stroke="#666"><path d="M.500 .500h10v10H.500zM3.500 0v11M7.500 0v11M0 3.500h11M0 7.500h11" /></Svg></ViewButton>
          <ViewButton aria-label="页面布局"><Svg w={12} h={11} stroke="#666"><path d="M.500 .500h11v10H.500zM3.500 2.500h5v6h-5zM5 4.500h2M5 6.500h2" /></Svg></ViewButton>
          <ViewButton aria-label="分页预览"><Svg w={12} h={11} stroke="#666"><path d="M.500 .500h11v10H.500zM.500 6.500h7v-6M4.500 .500v6" /></Svg></ViewButton>
        </Views>
        <ZoomStep aria-label="缩小"><Svg w={6} h={6} strokeWidth="2"><path d="M0 3h6" /></Svg></ZoomStep>
        <ZoomSlider type="range" min="10" max="190" defaultValue="90" aria-label="缩放" />
        <ZoomStep aria-label="放大"><Svg w={7} h={7} strokeWidth="2"><path d="M0 3.500h7M3.500 0v7" /></Svg></ZoomStep>
        <ZoomValue>90%</ZoomValue>
      </StatusBar>
      <Watermark>头条 @水哥经验</Watermark>
    </Window>
  );
}
